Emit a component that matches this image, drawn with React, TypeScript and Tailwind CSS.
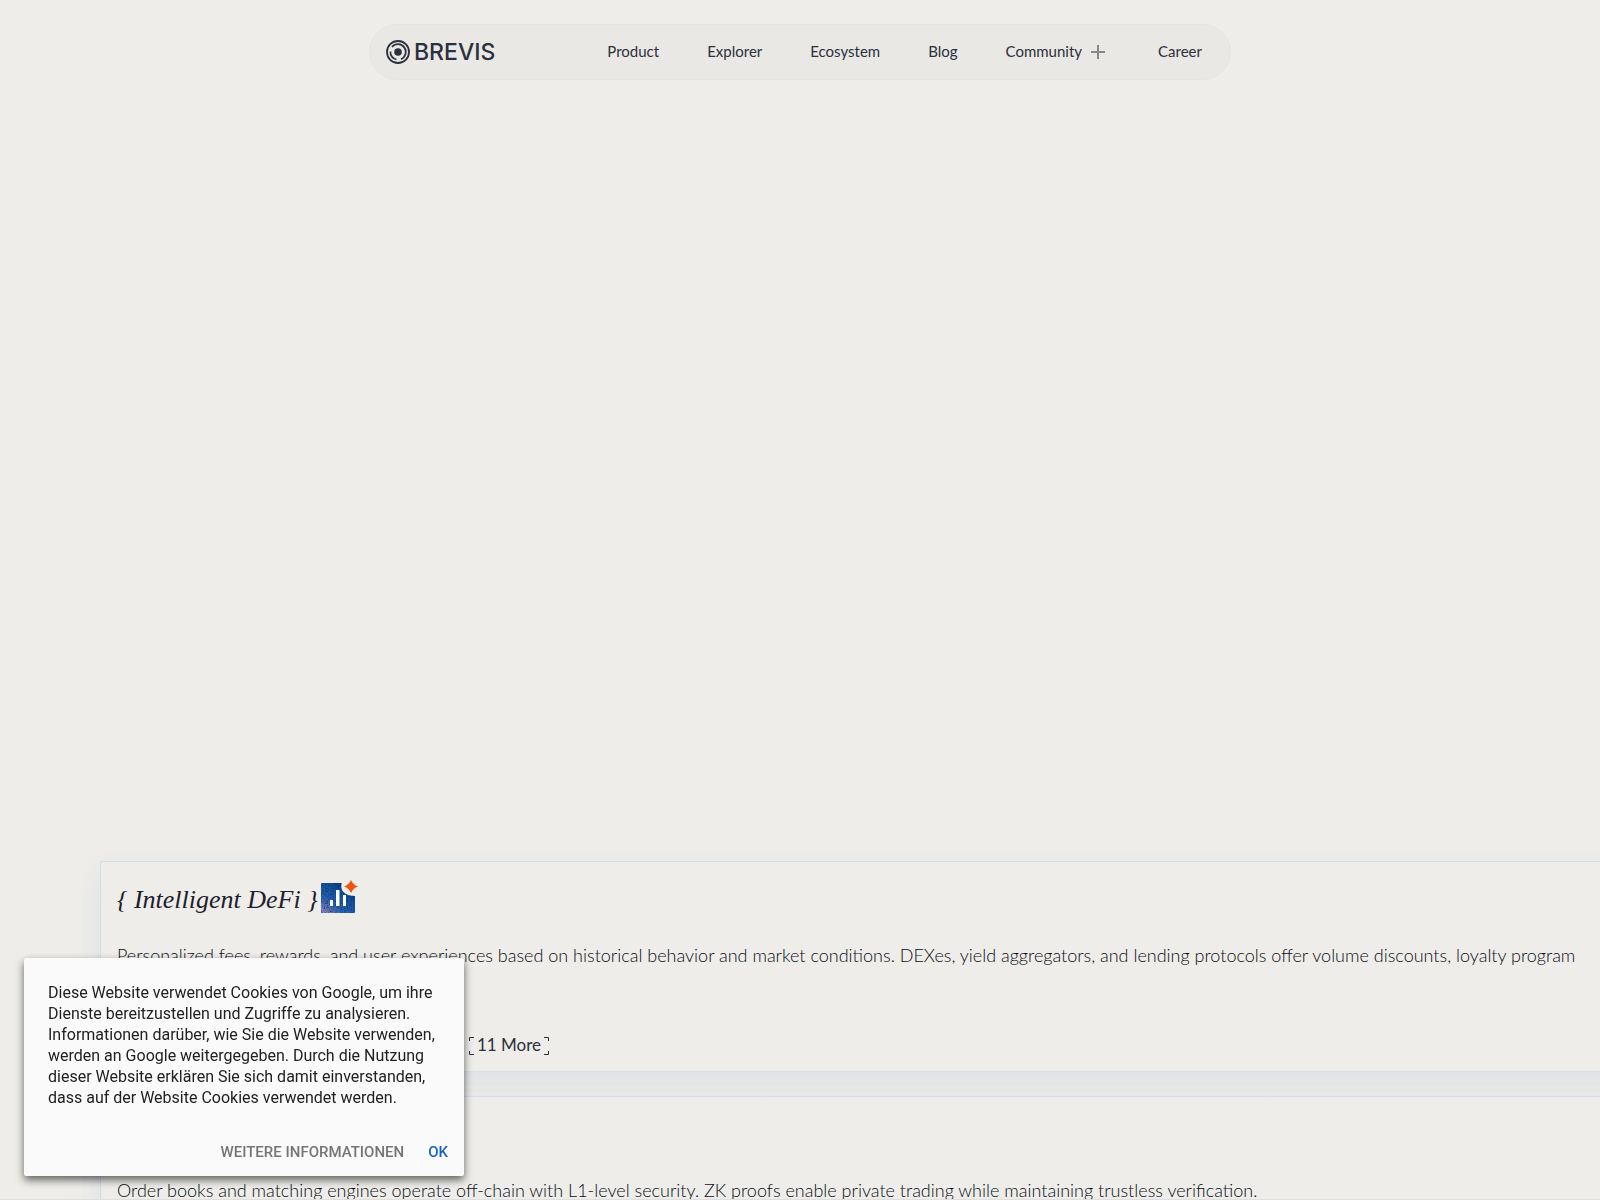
const nav = ['Product', 'Explorer', 'Ecosystem', 'Blog'];

function Emblem() {
  return (
    <svg viewBox="0 0 24 24" className="size-6 shrink-0" fill="none" stroke="#2b303d" aria-hidden="true">
      <circle cx="12" cy="12" r="11" strokeWidth="1.8" />
      <circle cx="12" cy="12" r="3.8" fill="#2b303d" stroke="none" />
      <path d="M6 7A7.8 7.8 0 1 1 15 19.200" strokeWidth="1.7" />
      <path d="M4.400 11.500a7.600 7.600 0 0 0 6 8" strokeWidth="1.7" />
    </svg>
  );
}

function ChartIcon() {
  return (
    <svg viewBox="0 0 38 33" className="mb-2 h-[33px] w-[38px] shrink-0" aria-hidden="true">
      <defs>
        <linearGradient id="night" x1="1" y1="0" x2="0.2" y2="1">
          <stop offset="0" stopColor="#0a1c48" />
          <stop offset="0.4" stopColor="#1a4f9c" />
          <stop offset="0.75" stopColor="#2f66b4" />
          <stop offset="1" stopColor="#8a84bc" />
        </linearGradient>
        <filter id="grain" x="0" y="0" width="1" height="1">
          <feTurbulence type="fractalNoise" baseFrequency="0.7" numOctaves="2" seed="4" result="n" />
          <feColorMatrix in="n" values="0 0 0 0 0  0 0 0 0 0.05  0 0 0 0 0.2  2.400 0 0 0 -0.9" result="d" />
          <feComposite in="d" in2="SourceAlpha" operator="in" result="g" />
          <feMerge>
            <feMergeNode in="SourceGraphic" />
            <feMergeNode in="g" />
          </feMerge>
        </filter>
      </defs>
      <path d="M1 3H21.500C20 11 24 15.500 35 16V32a1 1 0 0 1-1 1H2a1 1 0 0 1-1-1V4a1 1 0 0 1 1-1z" fill="url(#night)" filter="url(#grain)" />
      <path d="M10 20h3v6h-3zM16 10h3.500v16H16zM23 15h3v11h-3z" fill="#fff" />
      <path d="M31 0c1.600 3.600 3.400 5.200 7 6.500-3.600 1.400-5.400 3-7 6.500-1.600-3.500-3.400-5.100-7-6.500 3.600-1.300 5.400-2.900 7-6.500z" fill="#f0530f" />
    </svg>
  );
}

function Bracket({ side }: { side: 'left' | 'right' }) {
  return (
    <svg
      viewBox="0 0 5 18"
      className={side === 'left' ? 'absolute top-0 left-0 h-[18px] w-[5px]' : 'absolute top-0 right-0 h-[18px] w-[5px]'}
      fill="none"
      stroke="#2b303d"
      aria-hidden="true"
    >
      <path d={side === 'left' ? 'M5 .5H.5V4M.5 14v3.500H5' : 'M0 .5h4.500V4M4.500 14v3.500H0'} />
    </svg>
  );
}

export default function App() {
  return (
    <div className="h-screen overflow-hidden border-b border-[#dfdfe0] bg-[#eeede9] font-['Lato',sans-serif] text-[#2b303d]">
      <header className="fixed inset-x-0 top-6 z-10 flex justify-center">
        <div className="flex h-14 items-center rounded-full border border-[#e5e4e1] bg-[#e9e8e4] pr-7 pl-4">
          <a href="#home" className="mr-28 flex items-center gap-1 font-['Inter',sans-serif] text-[23px] leading-6 font-medium">
            <Emblem />
            BREVIS
          </a>
          <nav className="flex items-center gap-12 pb-0.5 text-[15px] leading-6">
            {nav.map((n) => (
              <a key={n} href={'#' + n.toLowerCase()}>{n}</a>
            ))}
            <button type="button" className="flex items-center gap-2">
              Community
              <svg viewBox="0 0 16 16" className="mt-0.5 mr-1 size-4" stroke="#85878a" strokeWidth="2" aria-hidden="true">
                <path d="M8 1v14M1 8h14" />
              </svg>
            </button>
            <a href="#career">Career</a>
          </nav>
        </div>
      </header>

      <main className="flex flex-col gap-6 pt-[861px] pl-[100px]">
        <article className="w-[1900px] border border-[#d2deec] p-4 shadow-[0_10px_24px_rgba(190,202,228,0.36)]">
          <h2 className="flex h-11 items-center gap-0.5 font-['Liberation_Serif',serif] text-[26px] leading-9 text-[#1d212c] italic">
            {'{ Intelligent DeFi }'}
            <ChartIcon />
          </h2>
          <p className="mt-5 h-11 pt-px text-lg leading-6 font-light whitespace-nowrap text-[#0a0e18]">
            Personalized fees, rewards, and user experiences based on historical behavior and market conditions. DEXes, yield aggregators, and lending protocols offer volume discounts, loyalty program
          </p>
          <div className="mt-[50px] ml-[352px] flex h-[19px] items-center">
            <button type="button" className="relative flex h-[18px] items-start px-2 text-[17px] leading-4">
              <Bracket side="left" />
              11 More
              <Bracket side="right" />
            </button>
          </div>
        </article>
        <article className="w-[1900px] border border-[#d2deec] bg-linear-to-b from-[#edecea] to-[#eeede9] to-20% px-4 pt-[81px] pb-20 shadow-[0_10px_24px_rgba(190,202,228,0.36)]">
          <p className="text-lg leading-6 font-light whitespace-nowrap text-[#0a0e18]">
            Order books and matching engines operate off-chain with L1-level security. ZK proofs enable private trading while maintaining trustless verification.
          </p>
        </article>
      </main>

      <aside className="fixed bottom-6 left-6 z-20 w-[440px] rounded-[2px] bg-[#fafafa] font-['Roboto',sans-serif] text-[#212121] shadow-[0_4px_8px_rgba(0,0,0,0.6)]">
        <p className="px-6 pt-6 text-[16px] leading-[21px]">
          Diese Website verwendet Cookies von Google, um ihre Dienste bereitzustellen und Zugriffe zu analysieren. Informationen darüber, wie Sie die Website verwenden, werden an Google weitergegeben. Durch die Nutzung dieser Website erklären Sie sich damit einverstanden, dass auf der Website Cookies verwendet werden.
        </p>
        <div className="mt-9 flex justify-end gap-6 px-4 pb-4 text-[15px] leading-4 font-medium">
          <a href="#info" className="text-[#757575]">WEITERE INFORMATIONEN</a>
          <button type="button" className="text-[#1565c0]">OK</button>
        </div>
      </aside>
    </div>
  );
}
